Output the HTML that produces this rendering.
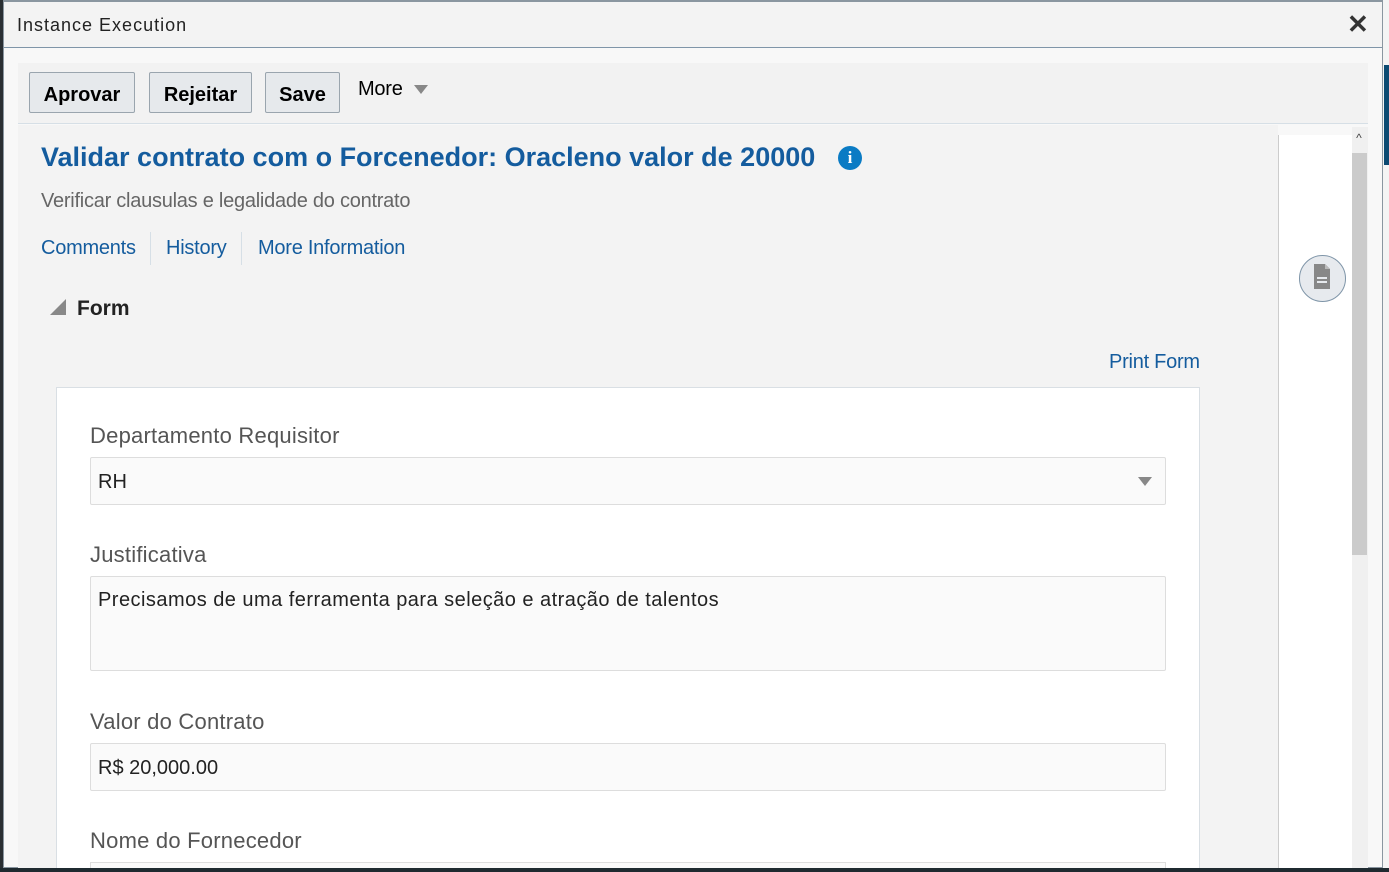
<!DOCTYPE html>
<html style="overflow:hidden;height:872px"><head><meta charset="utf-8"><style>
*{box-sizing:border-box;margin:0;padding:0}
body{width:1389px;height:872px;overflow:hidden;background:#3a3f44;font-family:"Liberation Sans",Arial,sans-serif;position:relative}
.abs{position:absolute}
.t{letter-spacing:-0.25px}
.l{letter-spacing:0.22px}
</style></head><body>
<div class="abs" style="left:1383px;top:0;width:6px;height:872px;background:#f4f4f4"></div>
<div class="abs" style="left:1384px;top:65px;width:5px;height:100px;background:#0b4a72"></div>
<div class="abs" style="left:0;top:0;width:3px;height:872px;background:#2a2f33"></div>
<div class="abs" style="left:3px;top:0;width:1380px;height:868px;background:#f8f8f8;border:1px solid #8a96a0;border-top:2px solid #8a96a0"></div>
<div class="abs" style="left:4px;top:2px;width:1378px;height:46px;background:#f3f3f3;border-bottom:1px solid #7f95a8"></div>
<div class="abs" style="left:17px;top:15px;font-size:18px;letter-spacing:1px;color:#222">Instance Execution</div>
<div class="abs" style="left:1347px;top:9px;font-size:26px;font-weight:bold;color:#333">✕</div>
<div class="abs" style="left:18px;top:63px;width:1350px;height:61px;background:#f2f2f2;border-bottom:1px solid #d6dfe6"></div>
<div class="abs" style="left:29px;top:72px;width:106px;height:41px;background:#e6e9ec;border:1px solid #9aa5ae;border-radius:2px;font-weight:bold;font-size:20px;line-height:45px;text-align:center;color:#000">Aprovar</div>
<div class="abs" style="left:149px;top:72px;width:103px;height:41px;background:#e6e9ec;border:1px solid #9aa5ae;border-radius:2px;font-weight:bold;font-size:20px;line-height:45px;text-align:center;color:#000">Rejeitar</div>
<div class="abs" style="left:265px;top:72px;width:75px;height:41px;background:#e6e9ec;border:1px solid #9aa5ae;border-radius:2px;font-weight:bold;font-size:20px;line-height:45px;text-align:center;color:#000">Save</div>
<div class="abs t" style="left:358px;top:78px;font-size:20px;color:#000">More</div>
<div class="abs" style="left:414px;top:85px;width:0;height:0;border-left:7px solid transparent;border-right:7px solid transparent;border-top:9px solid #888"></div>
<div class="abs" style="left:18px;top:125px;width:1260px;height:743px;background:#f3f3f3"></div>
<div class="abs" style="left:1278px;top:135px;width:74px;height:733px;background:#fff;border-left:1px solid #ccc"></div>
<div class="abs" style="left:1352px;top:127px;width:16px;height:741px;background:#f0f0f0"></div>
<div class="abs" style="left:1352px;top:153px;width:15px;height:402px;background:#cbcbcb"></div>
<div class="abs" style="left:1352px;top:131px;font-size:12px;color:#444;width:14px;text-align:center">^</div>
<div class="abs" style="left:1299px;top:255px;width:47px;height:47px;border-radius:50%;background:#e7eaee;border:1px solid #7f95a8"></div>
<svg class="abs" style="left:1312px;top:263px" width="20" height="28" viewBox="0 0 20 28"><path d="M2 1h11l5 5v20H2z" fill="#888"/><path d="M13 1v5h5" fill="#bbb"/><rect x="5" y="14" width="10" height="2" fill="#e7eaee"/><rect x="5" y="18" width="10" height="2" fill="#e7eaee"/></svg>
<div class="abs" style="left:41px;top:142px;font-size:27px;font-weight:bold;color:#145c9e">Validar contrato com o Forcenedor: Oracleno valor de 20000</div>
<div class="abs" style="left:838px;top:146px;width:24px;height:24px;border-radius:50%;background:#0a7bc4;color:#fff;font-weight:bold;font-size:17px;text-align:center;line-height:24px;font-family:'Liberation Serif',serif">i</div>
<div class="abs t" style="left:41px;top:190px;font-size:20px;color:#666">Verificar clausulas e legalidade do contrato</div>
<div class="abs t" style="left:41px;top:237px;font-size:20px;color:#145c9e">Comments</div>
<div class="abs" style="left:150px;top:232px;width:1px;height:33px;background:#d6dfe6"></div>
<div class="abs t" style="left:166px;top:237px;font-size:20px;color:#145c9e">History</div>
<div class="abs" style="left:241px;top:232px;width:1px;height:33px;background:#d6dfe6"></div>
<div class="abs t" style="left:258px;top:237px;font-size:20px;color:#145c9e">More Information</div>
<div class="abs" style="left:50px;top:299px;width:0;height:0;border-left:16px solid transparent;border-bottom:16px solid #888"></div>
<div class="abs" style="left:77px;top:297px;font-size:21px;font-weight:bold;color:#222">Form</div>
<div class="abs t" style="left:1109px;top:351px;font-size:20px;color:#145c9e">Print Form</div>
<div class="abs" style="left:56px;top:387px;width:1144px;height:481px;background:#fff;border:1px solid #d9dfe4;border-bottom:none"></div>
<div class="abs l" style="left:90px;top:423px;font-size:22px;color:#555">Departamento Requisitor</div>
<div class="abs" style="left:90px;top:457px;width:1076px;height:48px;background:#fafafa;border:1px solid #ddd;border-radius:2px"></div>
<div class="abs" style="left:98px;top:471px;font-size:20px;color:#222">RH</div>
<div class="abs" style="left:1138px;top:477px;width:0;height:0;border-left:7px solid transparent;border-right:7px solid transparent;border-top:9px solid #888"></div>
<div class="abs l" style="left:90px;top:542px;font-size:22px;color:#555">Justificativa</div>
<div class="abs" style="left:90px;top:576px;width:1076px;height:95px;background:#fafafa;border:1px solid #ddd;border-radius:2px"></div>
<div class="abs" style="left:98px;top:589px;font-size:20px;color:#222;letter-spacing:0.47px">Precisamos de uma ferramenta para seleção e atração de talentos</div>
<div class="abs l" style="left:90px;top:709px;font-size:22px;color:#555">Valor do Contrato</div>
<div class="abs" style="left:90px;top:743px;width:1076px;height:48px;background:#fafafa;border:1px solid #ddd;border-radius:2px"></div>
<div class="abs" style="left:98px;top:757px;font-size:20px;color:#222">R$ 20,000.00</div>
<div class="abs l" style="left:90px;top:828px;font-size:22px;color:#555">Nome do Fornecedor</div>
<div class="abs" style="left:90px;top:862px;width:1076px;height:6px;background:#fafafa;border:1px solid #ddd;border-bottom:none"></div>
<div class="abs" style="left:0;top:868px;width:1389px;height:4px;background:#1f2a30"></div>
</body></html>
